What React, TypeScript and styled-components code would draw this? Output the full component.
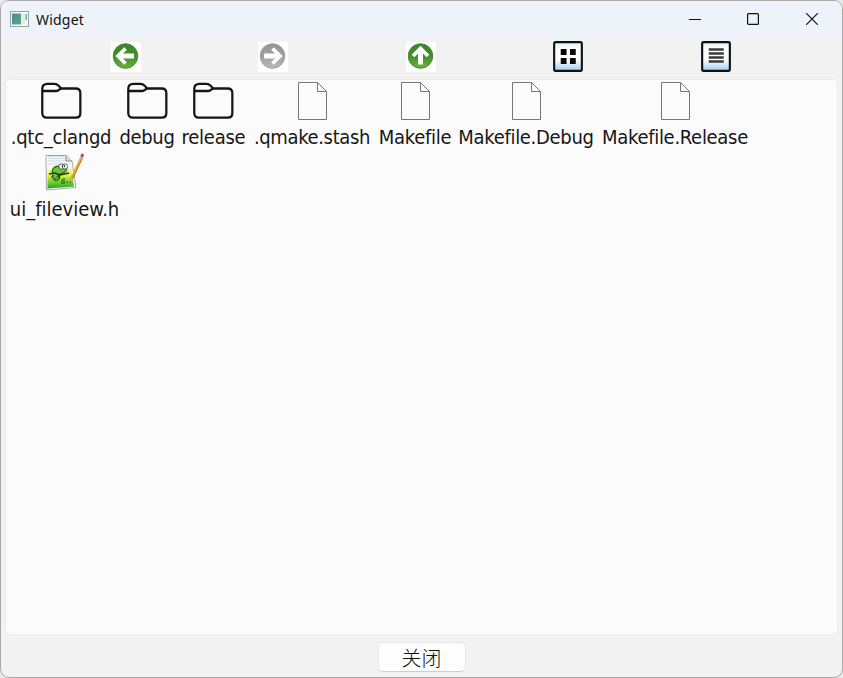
import React from "react";
import styled, { createGlobalStyle } from "styled-components";

const GlobalStyle = createGlobalStyle`
  * { box-sizing: border-box; }
  html, body { margin: 0; padding: 0; background: #e9e9e9; overflow: hidden; }
  svg { display: block; }
`;

const Desktop = styled.div`
  width: 843px;
  height: 678px;
  background: linear-gradient(#e9e9e9 0 22px, #1d8a52 22px 34px, #e9e9e9 34px 70px, #b5a36a 70px 73px, #1d8a52 73px 77px, #e9e9e9 77px);
`;

const Window = styled.main`
  width: 843px;
  height: 678px;
  display: flex;
  flex-direction: column;
  background: #f2f2f2;
  border: 1px solid #a9a9a9;
  border-radius: 9px;
  overflow: hidden;
`;

const TitleBar = styled.header`
  flex: 0 0 36px;
  display: flex;
  align-items: center;
  padding: 0 1px 0 9px;
  background: linear-gradient(90deg, #edf3f8, #eef2fa);
`;

const Title = styled.h1`
  flex: 1;
  margin: 1px 0 0 7px;
  font: 400 14px/20px "Noto Sans", sans-serif;
  letter-spacing: 0.2px;
  color: #111;
`;

const WindowButton = styled.button`
  width: 58.5px;
  height: 36px;
  padding: 0;
  border: 0;
  background: none;
  display: grid;
  place-items: center;
`;

const Toolbar = styled.nav`
  flex: 0 0 42px;
  display: grid;
  grid-template-columns: repeat(5, 147.5px);
  padding: 4px 0 0 51px;
`;

const ToolButton = styled.button`
  height: 31px;
  padding: 0;
  border: 0;
  background: none;
  display: grid;
  place-items: center;
`;

const FileView = styled.section`
  flex: 0 0 556px;
  margin: 0 4px 0 4px;
  background: #fbfbfb;
  border: 1px solid #ebebeb;
  border-radius: 5px;
  display: flex;
  flex-wrap: wrap;
  align-content: flex-start;
`;

const FileItem = styled.div<{ $width: number }>`
  width: ${(p) => p.$width}px;
  height: 72px;
  padding-top: 1px;
  display: flex;
  flex-direction: column;
  align-items: center;
`;

const FileName = styled.span<{ $spacing: number }>`
  margin-top: 1px;
  font: 400 20px/27px "DejaVu Sans Condensed", "DejaVu Sans", sans-serif;
  font-stretch: condensed;
  font-variant-ligatures: none;
  letter-spacing: ${(p) => p.$spacing}px;
  color: #161616;
  white-space: nowrap;
`;

const Footer = styled.footer`
  flex: 1;
  display: flex;
  justify-content: center;
  padding-top: 7px;
`;

const CloseButton = styled.button`
  width: 88px;
  height: 30px;
  padding: 1px 0 0;
  border: 1px solid #e7e7e7;
  border-bottom-color: #cfcfcf;
  border-radius: 5px;
  background: #fdfdfd;
  font: 300 20px/28px "Noto Sans CJK SC", sans-serif;
  color: #111;
`;

const AppIcon = () => (
  <svg width="19" height="16" viewBox="0 0 19 16">
    <defs>
      <linearGradient id="screen" x2="1" y2="1">
        <stop stopColor="#4b86a8" />
        <stop offset="1" stopColor="#55ad77" />
      </linearGradient>
    </defs>
    <rect x=".5" y=".5" width="18" height="15" fill="#f6f9fa" stroke="#98a1aa" />
    <rect x="2" y="2.5" width="9" height="11" fill="url(#screen)" />
    <rect x="12" y="3" width="3" height="10" fill="#e1e9e9" />
    <rect x="15.5" y="3" width="1.5" height="6" fill="#68ac98" />
  </svg>
);

const ArrowIcon = ({ angle, muted = false }: { angle: number; muted?: boolean }) => {
  const id = muted ? "disc-muted" : `disc-${angle}`;
  return (
    <svg width="30" height="30" viewBox="0 0 30 30">
      <defs>
        <linearGradient id={id} x2="0" y2="1">
          <stop stopColor={muted ? "#939393" : "#3d842a"} />
          <stop offset=".55" stopColor={muted ? "#a2a2a2" : "#43902a"} />
          <stop offset="1" stopColor={muted ? "#bababa" : "#6ab638"} />
        </linearGradient>
      </defs>
      <rect width="30" height="30" fill="#fff" />
      <circle cx="14.5" cy="14" r="12.3" fill={`url(#${id})`} stroke={muted ? "#a0a0a0" : "#4c8a3d"} />
      <g transform={`rotate(${angle} 14.5 14)`} fill="none" stroke="#fff">
        <path d="M7 14H23" strokeWidth="5" />
        <path d="M14.5 6.5L7 14L14.5 21.5" strokeWidth="3.8" />
      </g>
    </svg>
  );
};

const ModeIcon = ({ list = false }: { list?: boolean }) => {
  const id = list ? "list-glow" : "grid-glow";
  return (
    <svg width="30" height="31" viewBox="0 0 31 31" preserveAspectRatio="none">
      <defs>
        <linearGradient id={id} x2="0" y2="1">
          <stop stopColor="#e8eef2" />
          <stop offset=".25" stopColor="#fff" />
          <stop offset=".6" stopColor="#fff" />
          <stop offset="1" stopColor="#9fd0ee" />
        </linearGradient>
      </defs>
      <rect x="1.2" y="1.2" width="28.6" height="28.6" rx="1.5" fill={`url(#${id})`} stroke="#08131b" strokeWidth="2.2" />
      {list ? (
        <path d="M8 8.5H23.5M8 12.5H23.5M8 16.5H23.5M8 20.5H23.5" stroke="#3a3a3a" strokeWidth="2.3" />
      ) : (
        <path d="M8 8h6v6H8zM17.5 8h6v6h-6zM8 17h6v6H8zM17.5 17h6v6h-6z" fill="#080808" />
      )}
    </svg>
  );
};

const FolderIcon = () => (
  <svg width="41" height="42" viewBox="0 0 42 42" preserveAspectRatio="none" fill="none" stroke="#171514" strokeWidth="2.3">
    <path d="M1.3 8Q1.3 2.8 6.5 2.8H13.5C16.5 2.8 18.5 4.5 20.5 7.5H35.5Q40.3 7.5 40.3 12V32Q40.3 36.7 35.5 36.7H6Q1.3 36.7 1.3 32Z" />
    <path d="M1.8 10H15.5C18 10 18.5 8.5 20.5 7.5" />
  </svg>
);

const DocumentIcon = () => (
  <svg width="30" height="42" viewBox="-1 0 30 42" fill="none" stroke="#777">
    <path d="M.5 1.5H19.5L28.5 10.5V38.5H.5Z" fill="#fcfcfc" />
    <path d="M19.5 1.5V10.5H28.5" />
  </svg>
);

const HeaderFileIcon = () => (
  <svg width="41" height="42" viewBox="0 0 41 42" fill="none">
    <defs>
      <linearGradient id="meadow" x2="0" y2="1">
        <stop stopColor="#f5fce4" />
        <stop offset=".45" stopColor="#d4ef36" />
        <stop offset="1" stopColor="#18a728" />
      </linearGradient>
    </defs>
    <path d="M2 2.5H22L28 8L32 34.5L2.5 37Z" fill="#f9f9f7" stroke="#aaa" />
    <path d="M3.5 17L27 13L30 33.5L3.5 35.5Z" fill="url(#meadow)" />
    <path d="M4 5.5H22M4 8H23M4 11H26" stroke="#c9dce3" />
    <path d="M4 3H21" stroke="#777" strokeDasharray="1 1.5" />
    <path d="M22 2.5V8H28" fill="#ddd" stroke="#8d8d8d" />
    <path d="M8 21C8 14 12 12 17 14C20 10 24 13 22 18C19 21 17 20 15 22C17 27 11 30 9 25" fill="#65c832" stroke="#287322" strokeWidth="1.3" />
    <path d="M5 21L11 20L16 22L25 20M9 22L8 25M14 22L16 25" stroke="#382f18" strokeWidth="1.4" />
    <path d="M10 25C10 28 15 28 15 25C15 23 11 23 12 26" stroke="#287322" />
    <circle cx="17.5" cy="13.5" r="2.6" fill="#f5f7f2" stroke="#343434" strokeWidth=".7" />
    <circle cx="21" cy="13.5" r="2.6" fill="#f5f7f2" stroke="#343434" strokeWidth=".7" />
    <path d="M18.5 12.5V14M20.5 12.5V14" stroke="#111" />
    <path d="M18 26V31M20 25V31M22 29H24M25 29H27" stroke="#145f20" strokeWidth="1.1" />
    <path d="M38 4L27.5 26" stroke="#ba7714" strokeWidth="2.8" />
    <path d="M37.5 4L27 25.5" stroke="#f7b72d" strokeWidth="1.6" />
    <path d="M39 1L37.5 4" stroke="#a74f57" strokeWidth="2.8" />
    <path d="M38 4L37 6" stroke="#b4b4b4" strokeWidth="2.8" />
    <path d="M26 24L25.3 29L29 25.5Z" fill="#d2ab69" />
  </svg>
);

type File = { name: string; width: number; spacing: number; kind: "folder" | "document" | "header" };

const files: File[] = [
  { name: ".qtc_clangd", width: 110, spacing: -0.25, kind: "folder" },
  { name: "debug", width: 62, spacing: -0.35, kind: "folder" },
  { name: "release", width: 71, spacing: -0.25, kind: "folder" },
  { name: ".qmake.stash", width: 126, spacing: -0.35, kind: "document" },
  { name: "Makefile", width: 80, spacing: -0.3, kind: "document" },
  { name: "Makefile.Debug", width: 142, spacing: -0.3, kind: "document" },
  { name: "Makefile.Release", width: 156, spacing: -0.3, kind: "document" },
  { name: "ui_fileview.h", width: 117, spacing: 0, kind: "header" },
];

const icons = { folder: FolderIcon, document: DocumentIcon, header: HeaderFileIcon };

export default function App() {
  return (
    <Desktop>
      <GlobalStyle />
      <Window>
        <TitleBar>
          <AppIcon />
          <Title>Widget</Title>
          <WindowButton aria-label="Minimize">
            <svg width="12" height="12"><path d="M0 6.5H12" stroke="#111" /></svg>
          </WindowButton>
          <WindowButton aria-label="Maximize">
            <svg width="12" height="12"><rect x=".6" y=".6" width="10.8" height="10.8" rx="1" fill="none" stroke="#111" strokeWidth="1.2" /></svg>
          </WindowButton>
          <WindowButton aria-label="Close window">
            <svg width="12" height="12"><path d="M.3.3L11.7 11.7M11.7.3L.3 11.7" stroke="#111" strokeWidth="1.2" /></svg>
          </WindowButton>
        </TitleBar>
        <Toolbar>
          <ToolButton aria-label="Back"><ArrowIcon angle={0} /></ToolButton>
          <ToolButton aria-label="Forward"><ArrowIcon angle={180} muted /></ToolButton>
          <ToolButton aria-label="Up"><ArrowIcon angle={90} /></ToolButton>
          <ToolButton aria-label="Icon view"><ModeIcon /></ToolButton>
          <ToolButton aria-label="List view"><ModeIcon list /></ToolButton>
        </Toolbar>
        <FileView>
          {files.map(({ name, width, spacing, kind }) => {
            const Icon = icons[kind];
            return (
              <FileItem key={name} $width={width}>
                <Icon />
                <FileName $spacing={spacing}>{name}</FileName>
              </FileItem>
            );
          })}
        </FileView>
        <Footer>
          <CloseButton>关闭</CloseButton>
        </Footer>
      </Window>
    </Desktop>
  );
}
